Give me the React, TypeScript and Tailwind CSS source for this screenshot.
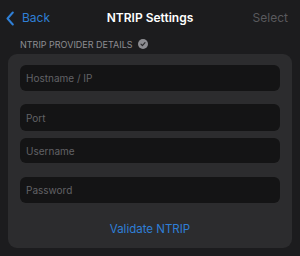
import React from "react";

const fields = [
  { label: "Hostname / IP", cls: "mt-[11px] h-[26px]" },
  { label: "Port", cls: "mt-[13px] h-[27px]" },
  { label: "Username", cls: "mt-[7px] h-[25px]" },
  { label: "Password", cls: "mt-[14px] h-[26px]" },
];

export default function App() {
  return (
    <div className="w-[300px] h-[256px] bg-[#1c1c1e] overflow-hidden font-['Inter',sans-serif]">
      {/* nav bar */}
      <div className="relative h-[36px] flex items-center justify-between pl-[6px] pr-[12px]">
        <div className="flex items-center gap-[8px] text-[#2f7fd6]">
          <svg width="8" height="15" viewBox="0 0 8 15" fill="none">
            <path d="M6.8 1.5L1.5 7.5L6.8 13.5" stroke="currentColor" strokeWidth="2" strokeLinecap="round" strokeLinejoin="round" />
          </svg>
          <span className="text-[12px] leading-none">Back</span>
        </div>
        <span className="absolute left-1/2 -translate-x-1/2 text-white text-[12px] font-semibold leading-none">
          NTRIP Settings
        </span>
        <span className="text-[12px] text-[#59595d] leading-none">Select</span>
      </div>

      {/* section header */}
      <div className="flex items-center gap-[5px] pl-[20px] h-[14px] mt-[1px]">
        <span className="text-[9px] text-[#8d8d92] leading-none">NTRIP PROVIDER DETAILS</span>
        <svg width="10" height="10" viewBox="0 0 10 10">
          <circle cx="5" cy="5" r="5" fill="#8d8d92" />
          <path d="M3 5.2L4.4 6.6L7 3.6" stroke="#2c2c2e" strokeWidth="1.2" fill="none" strokeLinecap="round" strokeLinejoin="round" />
        </svg>
      </div>

      {/* card */}
      <div className="mx-[8px] mt-[3px] h-[194px] rounded-[9px] bg-[#2c2c2e] px-[12px] flex flex-col">
        {fields.map((f) => (
          <div key={f.label} className={`${f.cls} rounded-[6px] bg-[#141415] flex items-center pl-[6px]`}>
            <span className="text-[10px] text-[#626266] leading-none">{f.label}</span>
          </div>
        ))}
        <div className="flex-1 flex items-center justify-center pt-[9px]">
          <span className="text-[11.5px] text-[#2f7fd6] leading-none">Validate NTRIP</span>
        </div>
      </div>
    </div>
  );
}
